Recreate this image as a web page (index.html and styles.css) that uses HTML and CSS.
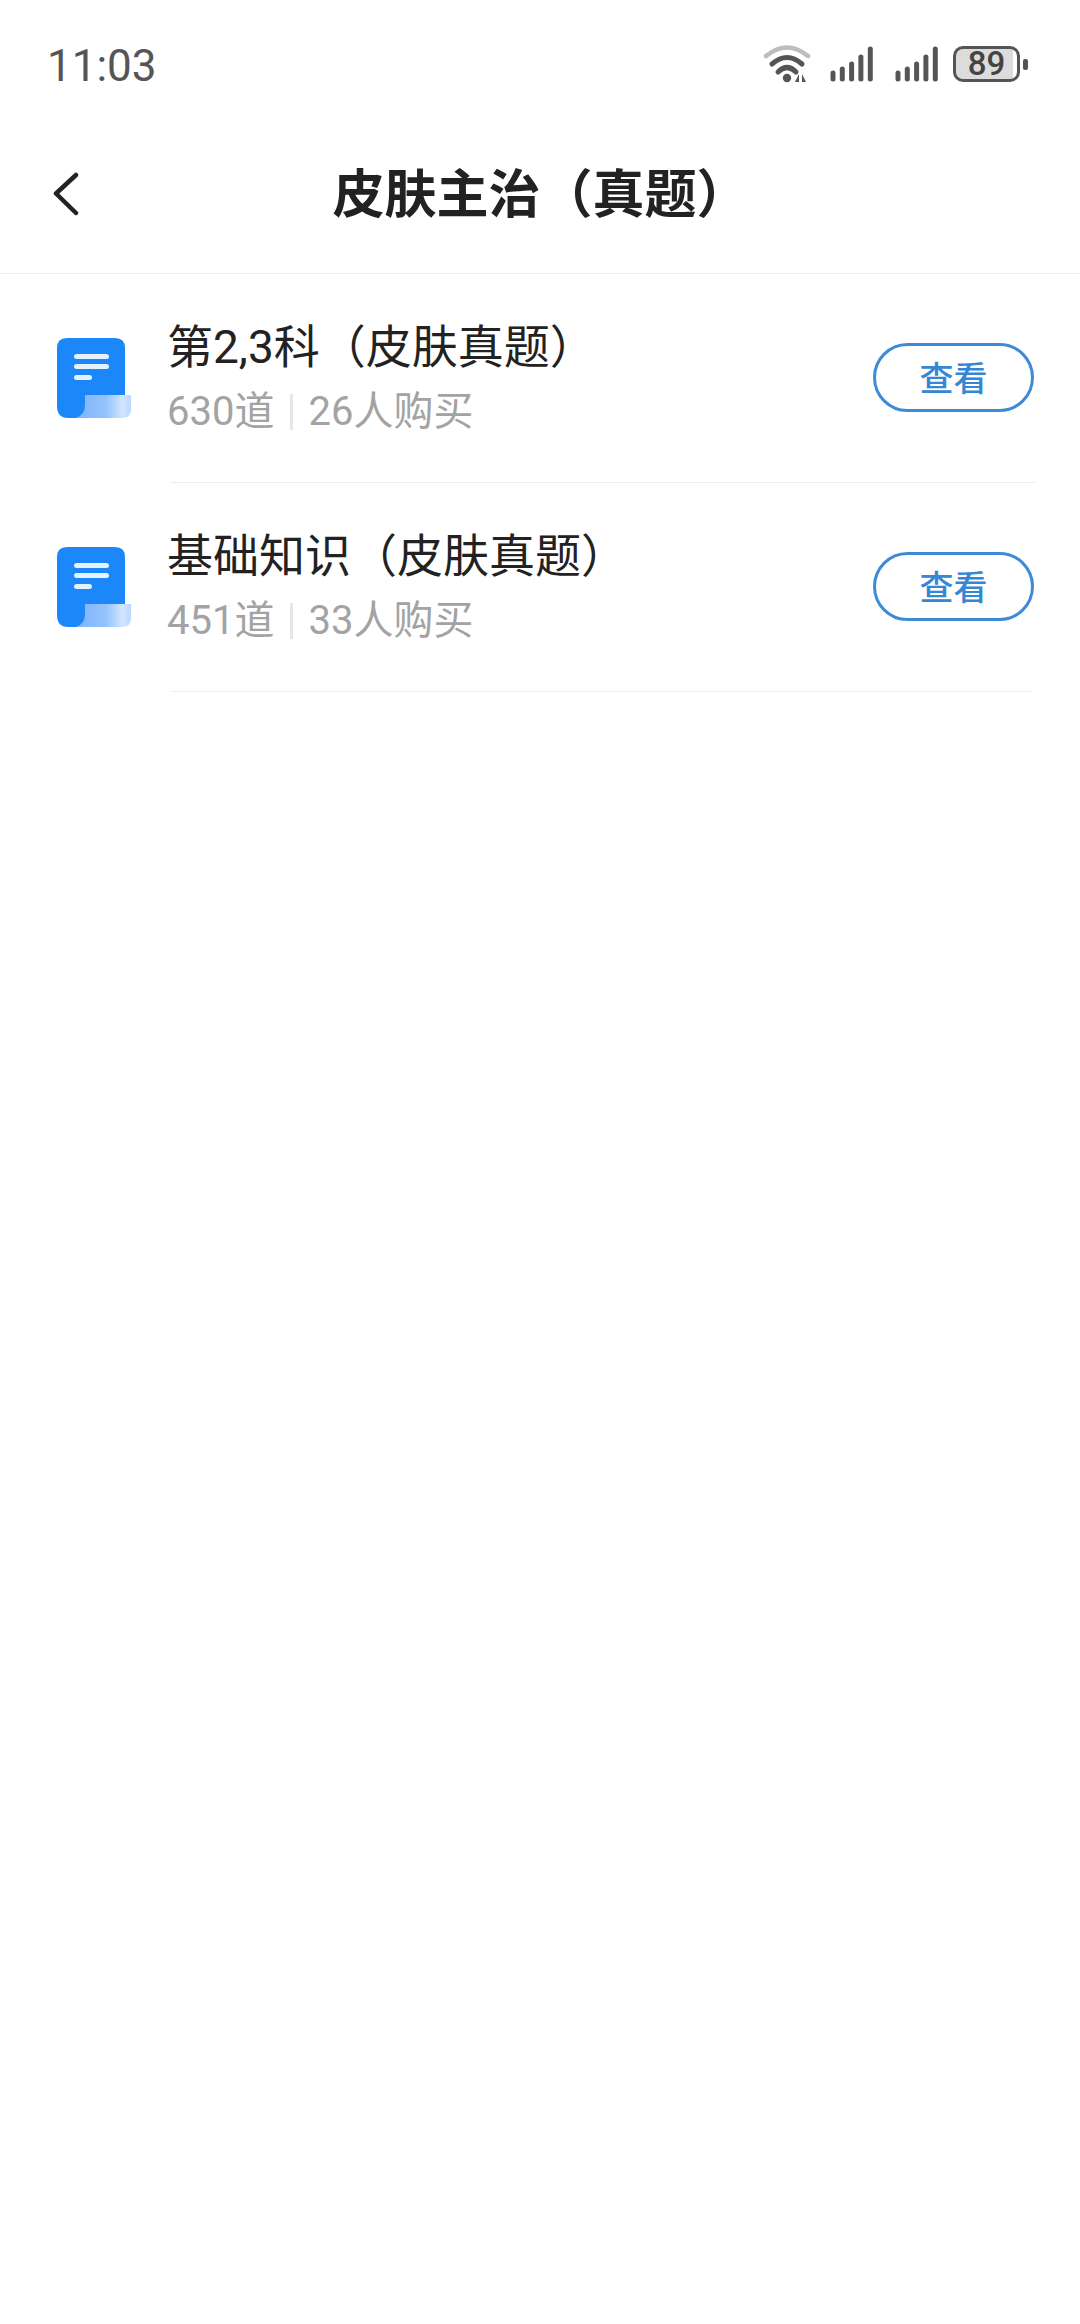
FILE: index.html
```html
<!DOCTYPE html>
<html lang="zh-CN">
<head>
<meta charset="utf-8">
<title>皮肤主治（真题）</title>
<link rel="stylesheet" href="styles.css">
</head>
<body>
<div class="status">
  <span class="time">11:03</span>
  <div class="status-icons">
    <svg class="wifi" width="50" height="42" viewBox="0 0 50 42">
      <path d="M3 12Q24 -5 45 12" fill="none" stroke="#bdbdbd" stroke-width="4.5" stroke-linecap="round"/>
      <path d="M9 20Q24 7 39 20" fill="none" stroke="#555" stroke-width="5" stroke-linecap="round"/>
      <path d="M15 28Q24 19 33 28" fill="none" stroke="#555" stroke-width="5" stroke-linecap="round"/>
      <circle cx="24" cy="34" r="4.2" fill="#555"/>
      <path d="M36 30V38H32ZM39 30V38H43Z" fill="#555"/>
    </svg>
    <svg class="signal" width="44" height="36" viewBox="0 0 44 36">
      <path d="M3 33V27M12.300 33V23M21.600 33V18M30.900 33V11M40.300 33V3" stroke="#555" stroke-width="5" stroke-linecap="round"/>
    </svg>
    <svg class="signal signal-last" width="44" height="36" viewBox="0 0 44 36">
      <path d="M3 33V27M12.300 33V23M21.600 33V18M30.900 33V11M40.300 33V3" stroke="#555" stroke-width="5" stroke-linecap="round"/>
    </svg>
    <div class="battery">
      <div class="battery-body"><span class="battery-num">89</span></div>
      <div class="battery-nub"></div>
    </div>
  </div>
</div>
<header class="nav">
  <svg class="back" width="30" height="44" viewBox="0 0 30 44">
    <path d="M25 3L5 21.500L25 41" fill="none" stroke="#222" stroke-width="4.500" stroke-linecap="round" stroke-linejoin="round"/>
  </svg>
  <h1 class="nav-title">皮肤主治（真题）</h1>
</header>
<main class="list">
  <div class="row">
    <svg class="doc" width="76" height="82" viewBox="0 0 76 82">
      <defs><linearGradient id="c1" x1="0" x2="1" y1="0" y2="0"><stop offset="0" stop-color="#7db4fb"/><stop offset="0.55" stop-color="#95c2fd"/><stop offset="0.85" stop-color="#d3e7fe"/><stop offset="1" stop-color="#b9d8fd"/></linearGradient></defs>
      <path d="M11 1H59Q69 1 69 11V60H36V68Q36 81 24 81H12Q1 81 1 69V11Q1 1 11 1Z" fill="#1b87f8"/>
      <path d="M29 58H75V72Q75 81 66 81H20Q29 78 29 68Z" fill="url(#c1)"/>
      <rect x="18" y="17" width="35" height="5" rx="2.500" fill="#e4f1ff"/>
      <rect x="18" y="27" width="35" height="5" rx="2.500" fill="#e4f1ff"/>
      <rect x="18" y="38" width="18" height="5" rx="2.500" fill="#e4f1ff"/>
    </svg>
    <div class="info">
      <div class="name">第2,3科（皮肤真题）</div>
      <div class="meta"><span>630道</span><i class="sep"></i><span>26人购买</span></div>
    </div>
    <button class="view">查看</button>
  </div>
  <div class="row">
    <svg class="doc" width="76" height="82" viewBox="0 0 76 82">
      <defs><linearGradient id="c2" x1="0" x2="1" y1="0" y2="0"><stop offset="0" stop-color="#7db4fb"/><stop offset="0.55" stop-color="#95c2fd"/><stop offset="0.85" stop-color="#d3e7fe"/><stop offset="1" stop-color="#b9d8fd"/></linearGradient></defs>
      <path d="M11 1H59Q69 1 69 11V60H36V68Q36 81 24 81H12Q1 81 1 69V11Q1 1 11 1Z" fill="#1b87f8"/>
      <path d="M29 58H75V72Q75 81 66 81H20Q29 78 29 68Z" fill="url(#c2)"/>
      <rect x="18" y="17" width="35" height="5" rx="2.500" fill="#e4f1ff"/>
      <rect x="18" y="27" width="35" height="5" rx="2.500" fill="#e4f1ff"/>
      <rect x="18" y="38" width="18" height="5" rx="2.500" fill="#e4f1ff"/>
    </svg>
    <div class="info">
      <div class="name">基础知识（皮肤真题）</div>
      <div class="meta"><span>451道</span><i class="sep"></i><span>33人购买</span></div>
    </div>
    <button class="view">查看</button>
  </div>
</main>
</body>
</html>
```
FILE: styles.css
```css
* { box-sizing: border-box; }
html, body { margin: 0; padding: 0; }
body {
  width: 1080px;
  height: 2324px;
  background: #fff;
  font-family: Roboto, "Noto Sans CJK SC", sans-serif;
  overflow: hidden;
}
.status {
  height: 90px;
  padding: 0 52px 0 47px;
  display: flex;
  align-items: flex-start;
  justify-content: space-between;
}
.time {
  margin-top: 40px;
  font-size: 44px;
  line-height: 52px;
  color: #555;
}
.status-icons {
  display: flex;
  align-items: flex-start;
  padding-top: 44px;
}
.wifi { margin-right: 17px; }
.signal { margin-top: 2px; margin-right: 21px; }
.signal-last { margin-right: 14px; }
.battery { display: flex; align-items: center; margin-top: 2px; }
.battery-body {
  width: 67px;
  height: 36px;
  border: 3px solid #555;
  border-radius: 10px;
  background: linear-gradient(to right, #dcdcdc 94%, #fff 94%);
  display: flex;
  align-items: center;
  justify-content: center;
}
.battery-num {
  font-size: 33px;
  font-weight: 500;
  line-height: 30px;
  color: #444;
}
.battery-nub {
  width: 5px;
  height: 11px;
  margin-left: 3px;
  background: #555;
  border-radius: 2px;
}
.nav {
  height: 184px;
  border-bottom: 1px solid #ececec;
  display: flex;
  align-items: center;
  justify-content: center;
  position: relative;
  padding-top: 28px;
}
.back { position: absolute; left: 51px; top: 82px; }
.nav-title {
  margin: 0 0 0 1px;
  font-size: 52px;
  font-weight: 700;
  line-height: 70px;
  color: #222;
}
.list { padding-left: 56px; }
.row {
  height: 209px;
  padding-bottom: 2px;
  display: flex;
  align-items: center;
  position: relative;
}
.row::after {
  content: "";
  position: absolute;
  left: 115px;
  right: 45px;
  bottom: 0;
  height: 1px;
  background: #ececec;
}
.row:last-child::after { left: 116px; right: 48px; }
.doc { flex: none; margin-right: 35px; }
.info { flex: 1; margin-top: 4px; }
.name {
  font-size: 46px;
  line-height: 62px;
  color: #222;
}
.meta {
  margin-top: 3px;
  display: flex;
  align-items: center;
  font-size: 40px;
  line-height: 62px;
  color: #a3a3a3;
}
.sep {
  width: 3px;
  height: 36px;
  margin: 0 15px 0 16px;
  background: #e6e6e6;
}
.view {
  flex: none;
  width: 161px;
  height: 69px;
  margin-right: 46px;
  padding: 0 0 3px;
  border: 3.500px solid #3d8bd6;
  border-radius: 35px;
  background: #fff;
  font-family: "Noto Sans CJK SC", sans-serif;
  font-size: 34px;
  font-weight: 500;
  color: #3586d5;
}
```
